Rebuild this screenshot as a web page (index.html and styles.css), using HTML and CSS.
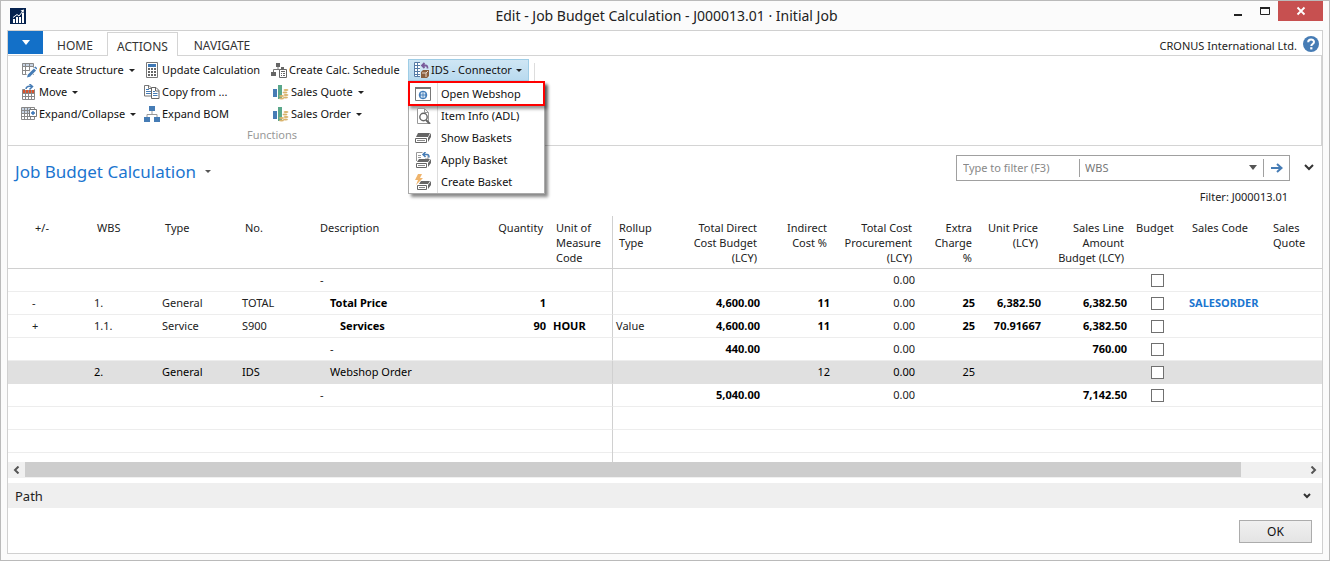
FILE: index.html
```html
<!DOCTYPE html>
<html lang="en">
<head>
<meta charset="utf-8">
<title>Edit - Job Budget Calculation</title>
<link rel="stylesheet" href="styles.css">
</head>
<body>
<div class="window">
  <header class="titlebar">
    <svg class="logo" viewBox="0 0 16 16"><path fill="#06234f" d="M0 0h16v16H0z"/><path fill="#fff" d="M3 11h2v4H3zM6 9h2v6H6zM9 9h2v6H9zM12 5h2v10h-2z"/><path d="M3 9.5 7 6.5l2 1.5 4-5" fill="none" stroke="#fff" stroke-width="1"/><path fill="#fff" d="M10.500 2.500 14 1.500l-.5 3.500z"/></svg>
    <h1 class="window-title">Edit - Job Budget Calculation - J000013.01 · Initial Job</h1>
    <div class="window-buttons">
      <button class="win-btn" aria-label="Minimize"><svg width="12" height="12" viewBox="0 0 12 12"><path fill="#222" d="M2 9h8v2H2z"/></svg></button>
      <button class="win-btn" aria-label="Maximize"><svg width="12" height="12" viewBox="0 0 12 12"><path d="M1.500 3.500h9v6h-9z" fill="none" stroke="#222"/><path fill="#222" d="M1 2h10v2H1z"/></svg></button>
      <button class="win-btn close" aria-label="Close"><svg width="10" height="10" viewBox="0 0 10 10"><path d="M1.500 1.500l7 7m0-7-7 7" stroke="#fff" stroke-width="1.800"/></svg></button>
    </div>
  </header>
  <main class="client">
    <nav class="tabs">
      <button class="file-tab" aria-label="Application menu"><svg width="8" height="5" viewBox="0 0 8 5"><path fill="#fff" d="M0 0h8L4 5z"/></svg></button>
      <button class="tab">HOME</button>
      <button class="tab active">ACTIONS</button>
      <button class="tab">NAVIGATE</button>
      <span class="company">CRONUS International Ltd.</span>
      <button class="help" aria-label="Help"><svg width="16" height="16" viewBox="0 0 16 16"><circle cx="8" cy="8" r="8" fill="#467cb5"/><path d="M5.200 6.200C5.200 2.600 11 2.700 11 6c0 2-2.700 2-2.700 4" fill="none" stroke="#fff" stroke-width="2"/><path fill="#fff" d="M7.200 11.200h2.200v2.200H7.200z"/></svg></button>
    </nav>
    <section class="ribbon">
      <div class="group">
        <div class="commands">
          <button class="cmd"><svg class="icon" viewBox="0 0 16 16"><path fill="#c7d3e2" d="M1 1h11v4H1z"/><path d="M1.500 1.500h11v11h-11zM1.500 4.500h11M1.500 8.500h11M4.500 1v12M8.500 1v12" fill="none" stroke="#888"/><path d="M7 14l7-7" stroke="#fff" stroke-width="5"/><path d="M8 13.500 14 7.500" stroke="#467cb5" stroke-width="3"/><path fill="#467cb5" d="M6 15.500l1-3.500 2.500 2.500zM13 5.500l1.500-1L16 6v1.500z"/></svg>Create Structure<i class="caret"></i></button>
          <button class="cmd"><svg class="icon" viewBox="0 0 16 16"><path fill="#d9532c" d="M1 6h12v4H1z"/><path d="M1.500 5.500h12v10h-12zM1.500 9.500h12M1.500 12.500h12M4.500 6v9M7.500 6v9M10.500 6v9" fill="none" stroke="#888"/><path fill="#fff" d="M4 0h9v6H4z"/><path d="M5 5c0-3 3-3 6-2.500" fill="none" stroke="#467cb5" stroke-width="1.500"/><path d="M8.500 0l3 2.500-3 3" fill="none" stroke="#467cb5" stroke-width="1.500"/></svg>Move<i class="caret"></i></button>
          <button class="cmd"><svg class="icon" viewBox="0 0 16 16"><path fill="#c7d3e2" d="M1 2h9v6H1z"/><path d="M.5 1.500h13v12H.5zM.5 4.500h13M.5 7.500h13M.5 10.500h13M3.500 2v12M6.500 2v12M9.500 2v12" fill="none" stroke="#888"/><path d="M8.500 3.500h7v7h-7z" fill="#fff" stroke="#777"/><path d="M12 5v4M10 7h4" stroke="#3673b5" stroke-width="1.400"/></svg>Expand/Collapse<i class="caret"></i></button>
          <button class="cmd"><svg class="icon" viewBox="0 0 16 16"><path d="M2.500.5h11v15h-11z" fill="#fff" stroke="#777"/><path fill="#3f78b5" d="M4 2h8v3H4z"/><path fill="#666" d="M4 6h2v2H4zM7 6h2v2H7zM10 6h2v2h-2zM4 9h2v2H4zM7 9h2v2H7zM10 9h2v2h-2zM4 12h2v2H4zM7 12h2v2H7zM10 12h2v2h-2z"/></svg>Update Calculation</button>
          <button class="cmd"><svg class="icon" viewBox="0 0 16 16"><path d="M.5 1.500H5l2.500 2.500v8h-7zM4.500 1.500V4.500H7" fill="#fff" stroke="#777"/><path d="M2 5.500h3M2 7.500h5M2 9.500h5" stroke="#467cb5"/><path d="M7.500 3.500h4.500l3 3v8H7.500zM11.500 3.500V7H15" fill="#fff" stroke="#666"/><path d="M9 7.500h2M9 9.500h4.500M9 11.500h4.500" stroke="#467cb5"/></svg>Copy from ...</button>
          <button class="cmd"><svg class="icon" viewBox="0 0 16 16"><path d="M8 5v4M3 11V8.500h10V11" fill="none" stroke="#999"/><path fill="#467cb5" d="M5 0h6v5H5zM0 11h6v5H0zM10 11h6v5h-6z"/></svg>Expand BOM</button>
          <button class="cmd"><svg class="icon" viewBox="0 0 16 16"><path d="M7 4v3M2.500 10V7.500h7" fill="none" stroke="#777"/><path fill="#666" d="M5 1h4v4H5zM0 10h5v4H0zM10 5h3v2h-3z"/><path d="M8.500 7.500h7v8h-7z" fill="#fff" stroke="#666"/><path fill="#666" d="M10 9h4v1h-4zM10 11h1v1h-1zM12 11h2v1h-2zM10 13h1v1h-1zM12 13h2v1h-2z"/></svg>Create Calc. Schedule</button>
          <button class="cmd inset"><svg class="icon" viewBox="0 0 16 16"><path fill="#467cb5" d="M0 5h4v8H0z"/><path fill="#59a78a" d="M5 1h4v14H5z"/><path d="M9 15c2 1 5 1 6-1l1-6-5-2-2 4z" fill="#fff"/><g fill="#d9b36c"><ellipse cx="13" cy="6" rx="2.500" ry="1"/><ellipse cx="12" cy="8.500" rx="2.500" ry="1"/><ellipse cx="13" cy="11" rx="2.500" ry="1"/><ellipse cx="8.500" cy="12" rx="2.500" ry="1"/><ellipse cx="12.500" cy="13.500" rx="2.500" ry="1"/><ellipse cx="8.500" cy="14.500" rx="2.500" ry="1"/></g></svg>Sales Quote<i class="caret"></i></button>
          <button class="cmd inset"><svg class="icon" viewBox="0 0 16 16"><path fill="#467cb5" d="M0 5h4v8H0z"/><path fill="#59a78a" d="M5 1h4v14H5z"/><path d="M9 15c2 1 5 1 6-1l1-6-5-2-2 4z" fill="#fff"/><g fill="#d9b36c"><ellipse cx="13" cy="6" rx="2.500" ry="1"/><ellipse cx="12" cy="8.500" rx="2.500" ry="1"/><ellipse cx="13" cy="11" rx="2.500" ry="1"/><ellipse cx="8.500" cy="12" rx="2.500" ry="1"/><ellipse cx="12.500" cy="13.500" rx="2.500" ry="1"/><ellipse cx="8.500" cy="14.500" rx="2.500" ry="1"/></g></svg>Sales Order<i class="caret"></i></button>
        </div>
        <div class="group-label">Functions</div>
      </div>
      <div class="connector">
        <button class="cmd open"><svg class="icon" viewBox="0 0 16 16"><path fill="#fff" d="M0 0h9v15H0z"/><path d="M.5.500h8v14h-8zM.5 3.500h8M.5 6.500h8M.5 9.500h8M.5 12.500h8M3.500.5v14" fill="none" stroke="#567aa5"/><path fill="#cfe6f4" d="M6 0h10v16H6z"/><path d="M8 3.500h3.500c2 0 2 1 2 3M10.500 1 8 3.500 10.500 6" fill="none" stroke="#7a5b9c" stroke-width="1.800"/><path fill="#8b6040" d="M7 10l2-2h6v6l-2 2H7z"/><path d="M8 11h4v4M12 11l2-2" fill="none" stroke="#e8d8cc"/></svg>IDS - Connector<i class="caret"></i></button>
        <div class="menu">
          <button class="item marked"><svg class="icon" viewBox="0 0 16 16"><path d="M.5 1.500h15v13H.5z" fill="#fff" stroke="#777"/><path fill="#777" d="M0 1h16v2H0z"/><circle cx="8" cy="9" r="3.800" fill="#dce8f4" stroke="#3673b5"/><path d="M4 9h8M8 5v8M6 6c-1 2-1 4 0 6M10 6c1 2 1 4 0 6" fill="none" stroke="#3673b5" stroke-width=".8"/></svg><span>Open Webshop</span></button>
          <button class="item"><svg class="icon" viewBox="0 0 16 16"><path d="M2.500.5h7l4 4v11h-11zM9.500.5v4h4" fill="#fff" stroke="#999"/><circle cx="8.500" cy="9" r="3.700" fill="#fff" stroke="#666" stroke-width="1.400"/><path d="M11 12l4 4" stroke="#666" stroke-width="2"/></svg><span>Item Info (ADL)</span></button>
          <button class="item"><svg class="icon" viewBox="0 0 16 16"><path fill="#666" d="M3 3h12l-2 4H1zM13 8l3-5v4l-3 5z"/><path d="M.5 8.500h11v4H.5z" fill="#fff" stroke="#666"/><path d="M2 10.500h8" stroke="#888"/></svg><span>Show Baskets</span></button>
          <button class="item"><svg class="icon" viewBox="0 0 16 16"><path d="M1.500 9V.5h6M3 3.500h3M3 5.500h3M10 7h3V2.500H8" fill="none" stroke="#999"/><path d="M10.500 0 8 2.500 10.500 5M8 2.500h4c2 0 2 1 2 3" fill="none" stroke="#467cb5" stroke-width="1.500"/><path fill="#666" d="M4 7h11l-2 3H2zM13 11l3-4v4l-3 4z"/><path d="M1.500 11.500h10v4h-10z" fill="#fff" stroke="#666"/><path d="M3 13.500h7" stroke="#888"/></svg><span>Apply Basket</span></button>
          <button class="item"><svg class="icon" viewBox="0 0 16 16"><path fill="#666" d="M6 7h9l-2 3H4zM13 11l3-4v4l-3 4z"/><path d="M2.500 11.500h9v4h-9z" fill="#fff" stroke="#666"/><path d="M4 13.500h6" stroke="#888"/><path fill="#efb46c" d="M3 0h4L5 4h3L1 11l2-5H0z"/></svg><span>Create Basket</span></button>
        </div>
      </div>
      <div class="separator"></div>
    </section>
    <section class="page-head">
      <h2 class="page-title">Job Budget Calculation<i class="caret dim"></i></h2>
      <div class="filter">
        <input class="filter-text" type="text" placeholder="Type to filter (F3)" aria-label="Filter text">
        <label class="filter-field"><select aria-label="Filter field"><option>WBS</option></select><svg width="8" height="5" viewBox="0 0 8 5"><path fill="#555" d="M0 0h8L4 5z"/></svg></label>
        <button class="go" aria-label="Apply filter"><svg width="12" height="10" viewBox="0 0 12 10"><path d="M0 5h10M6 1l4.500 4L6 9" fill="none" stroke="#467cb5" stroke-width="2"/></svg></button>
      </div>
      <button class="more" aria-label="Expand filter pane"><svg width="10" height="7" viewBox="0 0 10 7"><path d="M1 1l4 4 4-4" fill="none" stroke="#333" stroke-width="2"/></svg></button>
    </section>
    <p class="filter-note">Filter: J000013.01</p>
    <table class="grid">
      <colgroup><col class="c-lead"><col class="c-pm"><col class="c-wbs"><col class="c-type"><col class="c-no"><col><col class="c-qty"><col class="c-unit"><col class="c-roll"><col class="c-tdc"><col class="c-ind"><col class="c-tcp"><col class="c-ext"><col class="c-up"><col class="c-sla"><col class="c-bud"><col class="c-code"><col class="c-quote"></colgroup>
      <thead><tr><th></th><th>+/-</th><th>WBS</th><th>Type</th><th>No.</th><th>Description</th><th class="num">Quantity</th><th class="frozen">Unit of<br>Measure<br>Code</th><th>Rollup<br>Type</th><th class="num">Total Direct<br>Cost Budget<br>(LCY)</th><th class="num">Indirect<br>Cost %</th><th class="num">Total Cost<br>Procurement<br>(LCY)</th><th class="num">Extra<br>Charge<br>%</th><th class="num">Unit Price<br>(LCY)</th><th class="num">Sales Line<br>Amount<br>Budget (LCY)</th><th>Budget</th><th>Sales Code</th><th>Sales<br>Quote</th></tr></thead>
      <tbody>
        <tr><td></td><td></td><td></td><td></td><td></td><td>-</td><td></td><td class="frozen"></td><td></td><td></td><td></td><td class="num">0.00</td><td></td><td></td><td></td><td class="check"><input type="checkbox" aria-label="Budget"></td><td></td><td></td></tr>
        <tr><td></td><td>-</td><td>1.</td><td>General</td><td>TOTAL</td><td class="strong level1">Total Price</td><td class="num strong">1</td><td class="frozen"></td><td></td><td class="num strong">4,600.00</td><td class="num strong">11</td><td class="num">0.00</td><td class="num strong">25</td><td class="num strong">6,382.50</td><td class="num strong">6,382.50</td><td class="check"><input type="checkbox" aria-label="Budget"></td><td><a class="code" href="#">SALESORDER</a></td><td></td></tr>
        <tr><td></td><td>+</td><td>1.1.</td><td>Service</td><td>S900</td><td class="strong level2">Services</td><td class="num strong">90</td><td class="frozen strong">HOUR</td><td>Value</td><td class="num strong">4,600.00</td><td class="num strong">11</td><td class="num">0.00</td><td class="num strong">25</td><td class="num strong">70.91667</td><td class="num strong">6,382.50</td><td class="check"><input type="checkbox" aria-label="Budget"></td><td></td><td></td></tr>
        <tr><td></td><td></td><td></td><td></td><td></td><td class="level1">-</td><td></td><td class="frozen"></td><td></td><td class="num strong">440.00</td><td></td><td class="num">0.00</td><td></td><td></td><td class="num strong">760.00</td><td class="check"><input type="checkbox" aria-label="Budget"></td><td></td><td></td></tr>
        <tr class="selected"><td></td><td></td><td>2.</td><td>General</td><td>IDS</td><td class="level1">Webshop Order</td><td></td><td class="frozen"></td><td></td><td></td><td class="num">12</td><td class="num">0.00</td><td class="num">25</td><td></td><td></td><td class="check"><input type="checkbox" aria-label="Budget"></td><td></td><td></td></tr>
        <tr><td></td><td></td><td></td><td></td><td></td><td>-</td><td></td><td class="frozen"></td><td></td><td class="num strong">5,040.00</td><td></td><td class="num">0.00</td><td></td><td></td><td class="num strong">7,142.50</td><td class="check"><input type="checkbox" aria-label="Budget"></td><td></td><td></td></tr>
        <tr><td colspan="7"></td><td class="frozen"></td><td colspan="10"></td></tr>
        <tr class="last"><td colspan="7"></td><td class="frozen"></td><td colspan="10"></td></tr>
      </tbody>
    </table>
    <div class="scrollbar">
      <button class="scroll-btn" aria-label="Scroll left"><svg width="7" height="8" viewBox="0 0 7 8"><path d="M5.500.5 2 4l3.500 3.500" fill="none" stroke="#555" stroke-width="2"/></svg></button>
      <div class="track"><div class="thumb"></div></div>
      <button class="scroll-btn" aria-label="Scroll right"><svg width="7" height="8" viewBox="0 0 7 8"><path d="M1.500.5 5 4 1.500 7.500" fill="none" stroke="#555" stroke-width="2"/></svg></button>
    </div>
    <button class="path"><span>Path</span><svg width="8" height="6" viewBox="0 0 8 6"><path d="M1 1l3 3 3-3" fill="none" stroke="#333" stroke-width="2"/></svg></button>
    <footer class="footer"><button class="ok">OK</button></footer>
  </main>
</div>
</body>
</html>
```
FILE: styles.css
```css
* { box-sizing: border-box; }
body {
  margin: 0;
  font: 12px/16px "Noto Sans", "Open Sans", sans-serif;
  color: #222;
}
button, input, select { font: inherit; color: inherit; margin: 0; padding: 0; border: 0; background: none; }
svg { display: block; flex: none; }

.window {
  display: flex;
  flex-direction: column;
  min-height: 100vh;
  padding: 0 6px 6px;
  border: 1px solid #bababa;
  background: #fbfbfb;
}
.titlebar { display: grid; grid-template-columns: 1fr auto 1fr; align-items: center; height: 29px; padding-left: 3px; }
.logo { width: 16px; height: 16px; }
.window-title { margin: 0; font-size: 14px; font-weight: 400; line-height: 20px; }
.window-buttons { display: flex; justify-content: flex-end; align-self: start; }
.win-btn { display: flex; align-items: center; justify-content: center; width: 27px; height: 20px; }
.close { width: 45px; background: #c75050; }

.client { flex: 1; display: flex; flex-direction: column; border: 1px solid #d0d0d0; background: #fff; }
.tabs { display: flex; align-items: flex-end; height: 25px; border-bottom: 1px solid #d4d4d4; }
.file-tab { display: flex; align-items: center; justify-content: center; width: 35px; height: 23px; margin: 0 0 1px; background: #1370c8; }
.tab { height: 24px; width: 64px; padding-top: 4px; margin-bottom: -1px; color: #333; }
.tab.active { width: 71px; background: #fff; border: 1px solid #d4d4d4; border-bottom: 0; }
.tab:nth-child(4) { width: 88px; }
.company { margin-left: auto; padding-bottom: 1px; font-size: 11px; }
.help { margin: 0 3px 3px 6px; }

.ribbon { display: flex; height: 90px; border: 1px solid #d4d4d4; border-top: 0; border-left: 0; }
.group { padding: 3px 4px 0 13px; }
.commands {
  display: grid;
  grid-template: repeat(3, 22px) / 123px 127px 133px;
  grid-auto-flow: column;
}
.cmd { display: flex; align-items: center; gap: 2px; height: 22px; color: #111; white-space: nowrap; font-size: 11px; }
.inset { padding-left: 2px; }
.icon { width: 16px; height: 16px; }
.caret { border: 3px solid transparent; border-top: 3px solid #222; border-bottom: 0; margin-left: 3px; }
.group-label { width: 280px; padding: 2px 0 0 222px; color: #999; text-align: center; font-size: 11px; }
.connector { position: relative; padding-top: 3px; }
.cmd.open { width: 121px; padding-left: 5px; gap: 1px; border: 1px solid #9fcde6; background: linear-gradient(#cfe6f4, #b9daef); }
.menu {
  position: absolute;
  z-index: 2;
  top: 26px;
  left: 0;
  width: 137px;
  border: 1px solid #aaa;
  background: linear-gradient(90deg, #fff 28px, #ddd 28px, #ddd 29px, #fff 29px);
  box-shadow: 3px 3px 3px #0007;
}
.item { display: flex; align-items: center; gap: 10px; width: 100%; height: 22px; padding-left: 6px; color: #111; font-size: 11px; }
.item.marked { width: 137px; height: 25px; margin: -2px -1px -1px; border: 2px solid #f00; padding-left: 5px; box-shadow: 2px 3px 3px #0006; }
.separator { width: 1px; height: 77px; margin: 7px 0 0 5px; background: #ddd; }

.page-head { display: flex; align-items: center; height: 43px; padding: 0 8px 0 7px; }
.page-title { display: flex; align-items: center; gap: 6px; margin: 0 auto 0 0; color: #1b75cf; font-size: 17px; font-weight: 400; line-height: 24px; padding-top: 8px; }
.dim { border-top-color: #555; }
.filter { display: flex; align-items: center; width: 334px; height: 26px; border: 1px solid #a0a0a0; font-size: 11px; color: #777; }
.filter-text { width: 122px; height: 18px; padding-left: 6px; outline: 0; }
.filter-text::placeholder { color: #888; opacity: 1; }
.filter-field { display: flex; flex: 1; align-items: center; height: 18px; padding: 0 6px 0 5px; border: solid #a0a0a0; border-width: 0 1px; }
.filter-field select { flex: 1; appearance: none; outline: 0; }
.go { display: flex; justify-content: center; width: 25px; }
.more { margin-left: 14px; }
.filter-note { margin: 0; padding: 0 34px 12px 0; text-align: right; line-height: 15px; font-size: 11px; }

.grid { width: 100%; table-layout: fixed; border-collapse: separate; border-spacing: 0; font-size: 11px; line-height: 15px; }
.grid th { height: 53px; padding: 4px 6px 2px; border-bottom: 1px solid #d0d0d0; font-weight: 400; text-align: left; vertical-align: top; white-space: nowrap; }
.grid td { height: 23px; padding: 0 3px 2px; border-bottom: 1px solid #ededed; white-space: nowrap; }
.grid .num { text-align: right; }
.grid .frozen { border-right: 1px solid #d0d0d0; }
.grid td.frozen { padding-left: 4px; }
.grid th.frozen { padding-left: 7px; }
.grid th:nth-child(6) { padding-left: 3px; }
.strong { font-weight: 700; color: #000; }
.grid .level1 { padding-left: 13px; }
.grid .level2 { padding-left: 23px; }
.selected td { background: #e0e0e0; border-bottom-color: #e0e0e0; color: #000; }
.grid .check { padding: 0 5px 0 3px; }
.check input { display: block; appearance: none; width: 13px; height: 13px; margin: 1px auto 0; border: 1px solid #707070; background: #fff; }
.code { color: #1b75cf; font-weight: 700; text-decoration: none; }
.last td { height: 32px; background: linear-gradient(#ededed, #ededed) 0 22px / 100% 1px no-repeat; border-bottom: 0; }
.c-lead { width: 21px; }
.c-pm { width: 62px; }
.c-wbs { width: 68px; }
.c-type { width: 80px; }
.c-no { width: 78px; }
.c-qty { width: 68px; }
.c-unit { width: 64px; }
.c-roll { width: 63px; }
.c-tdc { width: 87px; }
.c-ind { width: 70px; }
.c-tcp { width: 85px; }
.c-ext { width: 60px; }
.c-up { width: 66px; }
.c-sla { width: 86px; }
.c-bud { width: 56px; }
.c-code { width: 81px; }
.c-quote { width: 55px; }

.scrollbar { display: flex; height: 16px; background: #f0f0f0; }
.scroll-btn { display: flex; align-items: center; justify-content: center; width: 17px; }
.track { flex: 1; }
.thumb { width: 95%; height: 15px; background: #cdcdcd; }
.path { display: flex; align-items: center; justify-content: space-between; height: 25px; margin-top: 5px; padding: 0 11px 0 7px; background: #efefef; font-size: 13px; }
.footer { display: flex; justify-content: flex-end; padding: 12px 10px 10px; }
.ok { width: 73px; height: 23px; border: 1px solid #acacac; background: linear-gradient(#f0f0f0, #e4e4e4); color: #111; }
```
